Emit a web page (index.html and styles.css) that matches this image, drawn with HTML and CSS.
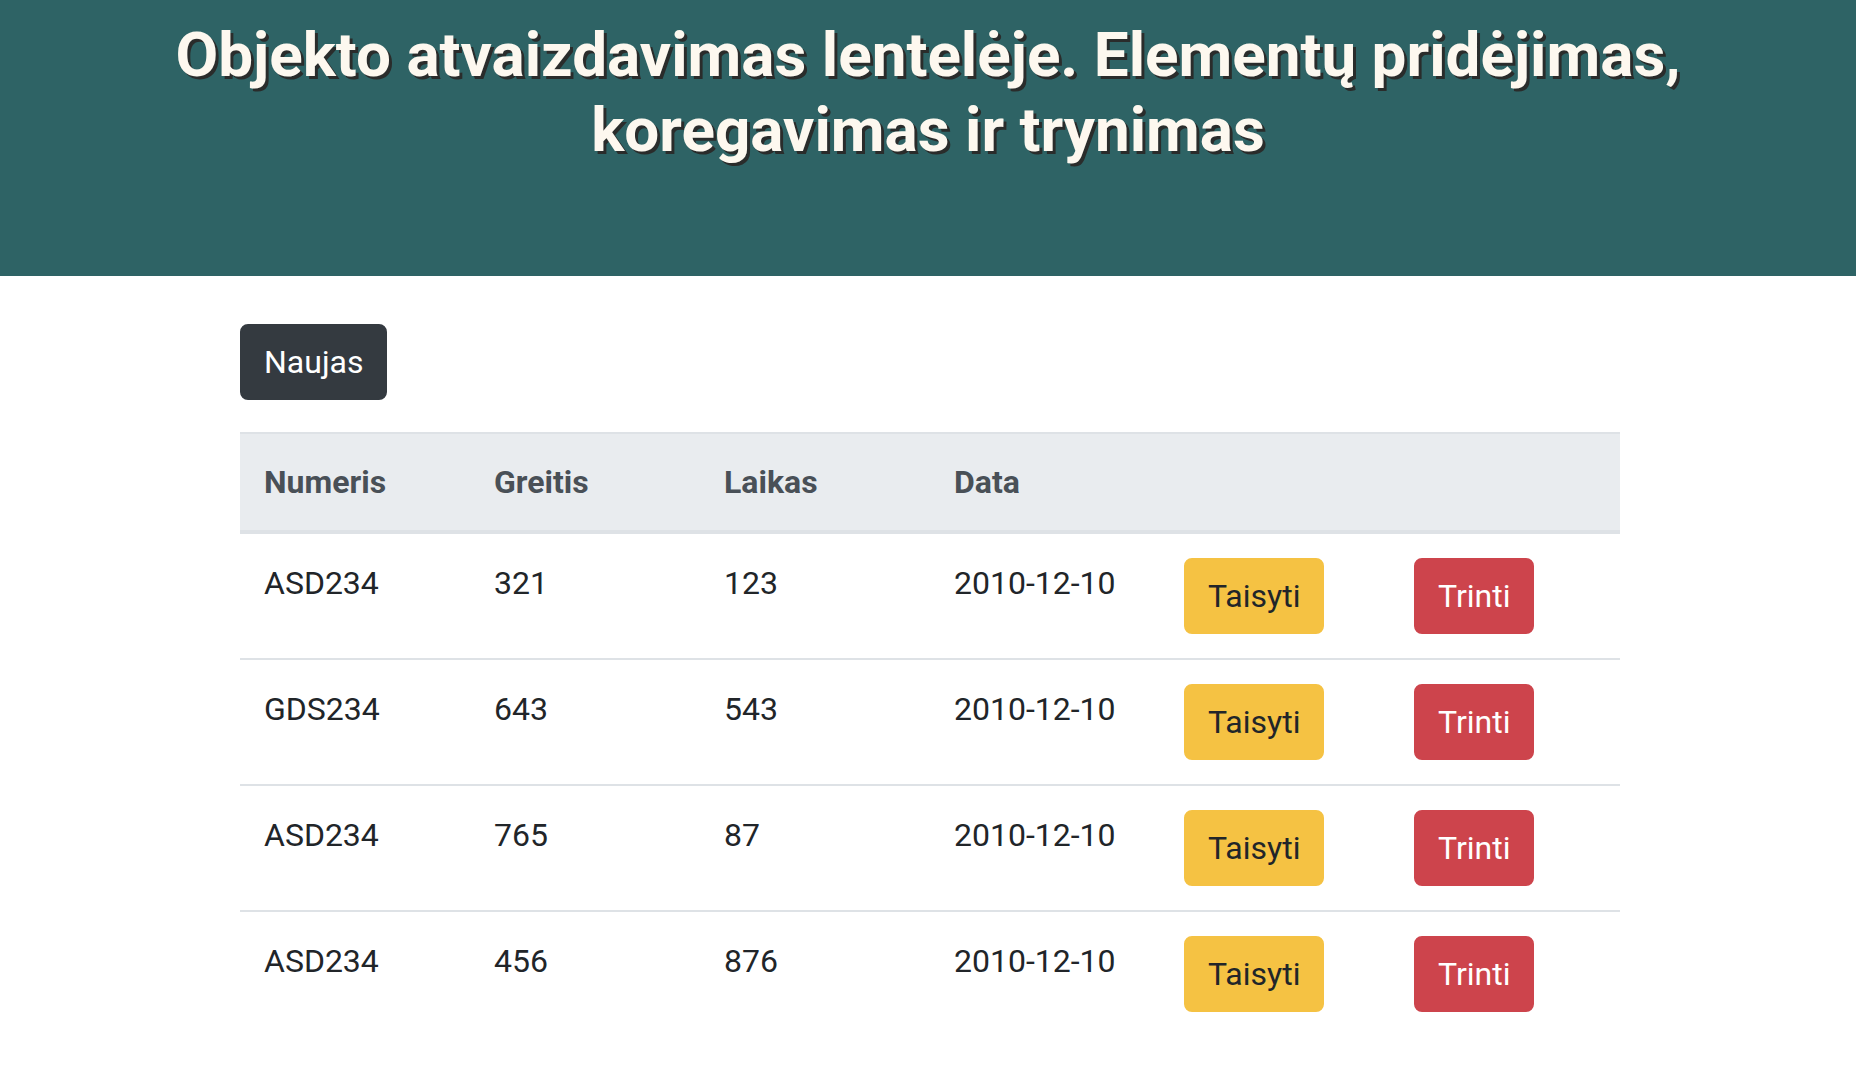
FILE: index.html
```html
<!DOCTYPE html>
<html lang="lt">
<head>
<meta charset="utf-8">
<title>Objektų lentelė</title>
<link rel="stylesheet" href="styles.css">
</head>
<body>
<header class="hero">
  <h2 class="hero-title">Objekto atvaizdavimas lentelėje. Elementų pridėjimas, koregavimas ir trynimas</h2>
</header>
<main class="container">
  <button class="btn btn-dark">Naujas</button>
  <table class="table">
    <thead>
      <tr><th>Numeris</th><th>Greitis</th><th>Laikas</th><th>Data</th><th></th><th></th></tr>
    </thead>
    <tbody>
      <tr><td>ASD234</td><td>321</td><td>123</td><td>2010-12-10</td><td><button class="btn btn-warning">Taisyti</button></td><td><button class="btn btn-danger">Trinti</button></td></tr>
      <tr><td>GDS234</td><td>643</td><td>543</td><td>2010-12-10</td><td><button class="btn btn-warning">Taisyti</button></td><td><button class="btn btn-danger">Trinti</button></td></tr>
      <tr><td>ASD234</td><td>765</td><td>87</td><td>2010-12-10</td><td><button class="btn btn-warning">Taisyti</button></td><td><button class="btn btn-danger">Trinti</button></td></tr>
      <tr><td>ASD234</td><td>456</td><td>876</td><td>2010-12-10</td><td><button class="btn btn-warning">Taisyti</button></td><td><button class="btn btn-danger">Trinti</button></td></tr>
    </tbody>
  </table>
</main>
</body>
</html>
```
FILE: styles.css
```css
* { box-sizing: border-box; }
html, body { margin: 0; padding: 0; background: #fff; }
body {
  font-family: Roboto, "Noto Sans", sans-serif;
  font-size: 32px;
  line-height: 48px;
  color: #212529;
}
.hero {
  background: #2e6365;
  padding: 17px 0 109px;
  text-align: center;
}
.hero-title {
  margin: 0 auto;
  max-width: 1560px;
  font-size: 62px;
  line-height: 75px;
  font-weight: 700;
  color: #fdf8ef;
  text-shadow: 3px 3px 0 #2a2c2b;
}
.container {
  width: 1380px;
  margin: 0 0 0 calc(50% - 688px);
  padding-top: 48px;
  display: flex;
  flex-direction: column;
  align-items: flex-start;
  gap: 32px;
}
.btn {
  font-family: inherit;
  font-size: 32px;
  line-height: 48px;
  padding: 12px 22px;
  border: 2px solid transparent;
  border-radius: 8px;
  cursor: pointer;
}
.btn-dark { background: #343a40; border-color: #343a40; color: #fff; }
.btn-warning { background: #f5c243; border-color: #f5c243; color: #212529; }
.btn-danger { background: #cd444c; border-color: #cd444c; color: #fff; }
.table {
  width: 1380px;
  table-layout: fixed;
  border-collapse: collapse;
}
.table th, .table td {
  padding: 24px;
  text-align: left;
  vertical-align: top;
  border-top: 2px solid #dee2e6;
}
.table td { padding-top: 25px; }
.table thead th {
  background: #e9ecef;
  color: #495057;
  font-weight: 700;
  border-bottom: 4px solid #dee2e6;
}
.table td .btn { margin-top: -1px; }
```
